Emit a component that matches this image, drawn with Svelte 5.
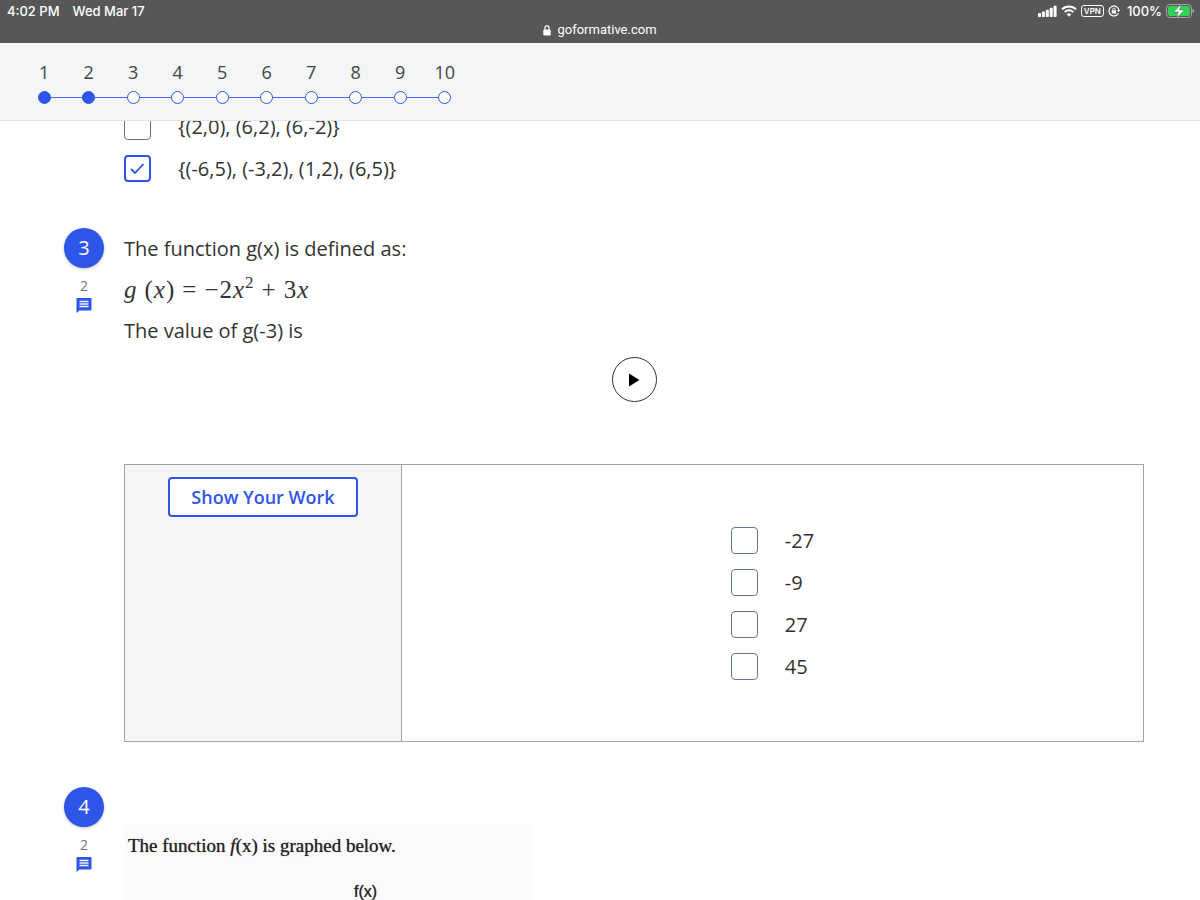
<script lang="ts">
    interface Option {
        label: string;
        checked: boolean;
    }

    const steps = Array.from({ length: 10 }, (_, i) => ({ number: i + 1, done: i < 2 }));

    let setOptions: Option[] = $state([
        { label: '{(2,0), (6,2), (6,-2)}', checked: false },
        { label: '{(-6,5), (-3,2), (1,2), (6,5)}', checked: true }
    ]);

    let valueOptions: Option[] = $state([
        { label: '-27', checked: false },
        { label: '-9', checked: false },
        { label: '27', checked: false },
        { label: '45', checked: false }
    ]);
</script>

{#snippet optionList(options: Option[])}
    <div class="options">
        {#each options as option}
            <label class="option">
                <input type="checkbox" bind:checked={option.checked} />
                <svg class="check" viewBox="0 0 27 27" aria-hidden="true">
                    <path d="M7 14l4 4 8.500-9" fill="none" stroke="#2f55e8" stroke-width="1.800" />
                </svg>
                <span>{option.label}</span>
            </label>
        {/each}
    </div>
{/snippet}

{#snippet marker(number: number, points: number)}
    <div class="marker">
        <div class="badge">{number}</div>
        <div class="points">{points}</div>
        <button class="comment" aria-label="Comments">
            <svg width="16" height="16" viewBox="0 0 16 16">
                <path d="M1.500 0h13a1 1 0 0 1 1 1v10.500a1 1 0 0 1-1 1H3.500L.5 15V1a1 1 0 0 1 1-1z" fill="#2f55e8" />
                <path d="M3.500 3.500h9M3.500 6h9M3.500 8.500h9" stroke="#eef1fe" stroke-width="1.500" />
            </svg>
        </button>
    </div>
{/snippet}

<div class="page">
    <header class="status">
        <div class="status-row">
            <div class="clock">
                <span>4:02 PM</span>
                <span>Wed Mar 17</span>
            </div>
            <div class="device">
                <svg width="19" height="12" viewBox="0 0 19 12" fill="#fff">
                    <rect x="0" y="8" width="3" height="4" rx="0.800" />
                    <rect x="3.900" y="6.500" width="3" height="5.500" rx="0.800" />
                    <rect x="7.800" y="4.700" width="3" height="7.300" rx="0.800" />
                    <rect x="11.700" y="2.800" width="3" height="9.200" rx="0.800" />
                    <rect x="15.600" y="0.800" width="3" height="11.200" rx="0.800" />
                </svg>
                <svg width="16" height="12" viewBox="0 0 16 12" fill="none" stroke="#fff" stroke-width="2">
                    <path d="M1 4.300a10 10 0 0 1 14 0" />
                    <path d="M3.700 7.100a6.200 6.200 0 0 1 8.600 0" />
                    <path d="M8 11.700L5.700 9.300a3.300 3.300 0 0 1 4.600 0z" fill="#fff" stroke="none" />
                </svg>
                <span class="vpn">VPN</span>
                <svg width="12" height="12" viewBox="0 0 12 12" fill="none" stroke="#fff">
                    <path d="M10.400 8.300A5 5 0 1 1 10.900 5.200" stroke-width="1.200" />
                    <path d="M9.200 5h2.800l-1.300 2.200z" fill="#fff" stroke="none" />
                    <rect x="3.700" y="5.300" width="4.400" height="3.300" rx="0.500" fill="#fff" stroke="none" />
                    <path d="M4.700 5.500V4.300a1.200 1.200 0 0 1 2.400 0v1.200" stroke-width="0.900" />
                </svg>
                <span class="percent">100%</span>
                <svg width="28" height="14" viewBox="0 0 28 14">
                    <rect x="0.500" y="0.500" width="25" height="13" rx="3.500" fill="none" stroke="#a5a5a5" />
                    <rect x="2" y="2" width="22" height="10" rx="2" fill="#33d158" />
                    <path d="M26.500 4.800v4.400a2.300 2.300 0 0 0 0-4.400z" fill="#a5a5a5" />
                    <path d="M15.300 0L7.500 8h4.800l-1.800 6L18.500 6h-4.900z" fill="#fff" stroke="#575757" stroke-width="0.500" />
                </svg>
            </div>
        </div>
        <div class="address">
            <svg width="8" height="11" viewBox="0 0 8 11">
                <rect x="0.300" y="4.500" width="7.400" height="6" rx="1" fill="#fff" />
                <path d="M1.900 5V3a2.100 2.100 0 0 1 4.200 0v2" fill="none" stroke="#fff" stroke-width="1.100" />
            </svg>
            <span>goformative.com</span>
        </div>
    </header>

    <nav class="progress">
        <div class="steps">
            {#each steps as step}
                <a class="step" class:done={step.done} href="#question-{step.number}">
                    <span>{step.number}</span>
                    <span class="dot"></span>
                </a>
            {/each}
        </div>
    </nav>

    <main class="questions">
        <section class="question">
            <div class="content scrolled">
                {@render optionList(setOptions)}
            </div>
        </section>

        <section class="question third" id="question-3">
            {@render marker(3, 2)}
            <div class="content">
                <p>The function g(x) is defined as:</p>
                <p class="math">
                    <i>g</i>
                    <span class="arg"><span>(</span><i>x</i><span>)</span></span>
                    <span>=</span>
                    <span class="term"><span>−</span><span>2</span><i>x</i><sup>2</sup></span>
                    <span>+</span>
                    <span class="term"><span>3</span><i>x</i></span>
                </p>
                <p>The value of g(-3) is</p>
                <button class="play" aria-label="Play">
                    <svg width="12" height="14" viewBox="0 0 12 14"><path d="M1 .5l10.500 6.500L1 13.500z" /></svg>
                </button>
                <div class="work">
                    <div class="work-side">
                        <button class="show-work">Show Your Work</button>
                    </div>
                    <div class="work-answers">
                        {@render optionList(valueOptions)}
                    </div>
                </div>
            </div>
        </section>

        <section class="question fourth" id="question-4">
            {@render marker(4, 2)}
            <div class="content">
                <figure class="graph">
                    <figcaption>The function <i>f</i>(x) is graphed below.</figcaption>
                    <div class="axis">f(x)</div>
                </figure>
            </div>
        </section>
    </main>
</div>

<style>
    :global(body) {
        margin: 0;
        background: #fff;
    }

    .page {
        height: 100vh;
        overflow: hidden;
        display: flex;
        flex-direction: column;
        font-family: "Open Sans", "Noto Sans", sans-serif;
        font-size: 20px;
        color: #333;
    }

    button {
        padding: 0;
        border: none;
        background: none;
        font-family: inherit;
        cursor: pointer;
    }

    .status {
        flex: none;
        height: 43px;
        box-sizing: border-box;
        background: #575757;
        color: #fff;
        font-family: Inter, sans-serif;
        font-size: 13px;
    }

    .status-row {
        display: flex;
        justify-content: space-between;
        height: 22px;
        padding: 0 6px 0 7px;
        font-weight: 500;
    }

    .clock,
    .device {
        display: flex;
        align-items: center;
    }

    .clock {
        gap: 13px;
    }

    .device {
        gap: 4px;
    }

    .vpn {
        padding: 0 2px;
        border: 1px solid #fff;
        border-radius: 3px;
        font-size: 8px;
        font-weight: 600;
        line-height: 10px;
    }

    .percent {
        margin-left: 3px;
    }

    .address {
        display: flex;
        align-items: center;
        justify-content: center;
        gap: 6px;
        font-family: Roboto, sans-serif;
        line-height: 16px;
    }

    .progress {
        flex: none;
        height: 78px;
        box-sizing: border-box;
        padding: 15px 22px 0;
        background: #f3f5f7;
        border-bottom: 1px solid #e2e4e8;
        z-index: 1;
    }

    .steps {
        display: grid;
        grid-template-columns: repeat(10, 1fr);
        max-width: 445px;
    }

    .step {
        position: relative;
        display: flex;
        flex-direction: column;
        align-items: center;
        gap: 5px;
        color: #444;
        font-size: 18px;
        line-height: 28px;
        text-decoration: none;
    }

    .step:not(:last-child)::after {
        content: "";
        position: absolute;
        bottom: 6px;
        left: 50%;
        width: 100%;
        height: 1px;
        background: #4a6aeb;
    }

    .dot {
        box-sizing: border-box;
        width: 13px;
        height: 13px;
        border: 1px solid #2f55e8;
        border-radius: 50%;
        background: #fff;
        z-index: 1;
    }

    .done .dot {
        background: #2f55e8;
    }

    .questions {
        flex: 1;
        min-height: 0;
        overflow: hidden;
        padding: 0 56px 0 64px;
    }

    .question {
        display: flex;
        gap: 20px;
    }

    .third {
        margin-top: 39px;
    }

    .fourth {
        margin-top: 45px;
    }

    .content {
        flex: 1;
        min-width: 0;
    }

    .scrolled {
        margin-top: -16px;
        margin-left: 60px;
    }

    .option {
        position: relative;
        display: flex;
        align-items: center;
        gap: 27px;
        height: 42px;
        cursor: pointer;
    }

    .option input {
        appearance: none;
        box-sizing: border-box;
        width: 27px;
        height: 27px;
        margin: 0;
        border: 1px solid #66749c;
        border-radius: 4px;
        background: #fff;
    }

    .option input:checked {
        border: 2px solid #2f55e8;
    }

    .check {
        position: absolute;
        left: 0;
        width: 27px;
        height: 27px;
        visibility: hidden;
    }

    .option input:checked + .check {
        visibility: visible;
    }

    .marker {
        display: flex;
        flex-direction: column;
        align-items: center;
        width: 40px;
    }

    .badge {
        width: 40px;
        height: 40px;
        border-radius: 50%;
        background: #2f55e8;
        box-shadow: 0 1px 3px rgba(0, 0, 0, 0.25);
        color: #fff;
        line-height: 39px;
        text-align: center;
    }

    .points {
        margin-top: 8px;
        color: #777;
        font-size: 14px;
        line-height: 20px;
    }

    .comment {
        height: 16px;
        margin-top: 2px;
        line-height: 0;
    }

    p {
        margin: 0;
        line-height: 41px;
    }

    .math {
        display: flex;
        gap: 8px;
        height: 41px;
        font-family: "Liberation Serif", serif;
        font-size: 25px;
    }

    .math sup {
        margin-top: -7px;
        font-size: 17px;
    }

    .arg,
    .term {
        display: flex;
        gap: 1px;
    }

    .play {
        display: flex;
        align-items: center;
        justify-content: center;
        width: 45px;
        height: 45px;
        margin: 6px auto 62px;
        border: 1px solid #333;
        border-radius: 50%;
    }

    .work {
        display: flex;
        min-height: 276px;
        border: 1px solid #a3a3a3;
    }

    .work-side {
        flex: 0 0 277px;
        padding-top: 12px;
        box-sizing: border-box;
        border-right: 1px solid #a3a3a3;
        background: #f3f5f7;
        text-align: center;
    }

    .show-work {
        width: 190px;
        height: 40px;
        border: 2px solid #2f55e8;
        border-radius: 4px;
        background: #fff;
        color: #2f55e8;
        font-size: 18px;
        font-weight: 600;
    }

    .work-answers {
        flex: 1;
        display: flex;
        align-items: center;
        justify-content: center;
    }

    .graph {
        max-width: 408px;
        min-height: 120px;
        box-sizing: border-box;
        margin: 36px 0 0;
        padding: 8px 4px;
        background: #fbfbfb;
        font-family: "Liberation Serif", serif;
        font-size: 19px;
        color: #222;
        line-height: 30px;
        /* scanned worksheet look */
        text-shadow: 0 0 1px rgba(0, 0, 0, 0.6);
    }

    .axis {
        margin-top: 16px;
        padding-left: 226px;
        font-family: "Liberation Sans", sans-serif;
        font-size: 16px;
    }
</style>
